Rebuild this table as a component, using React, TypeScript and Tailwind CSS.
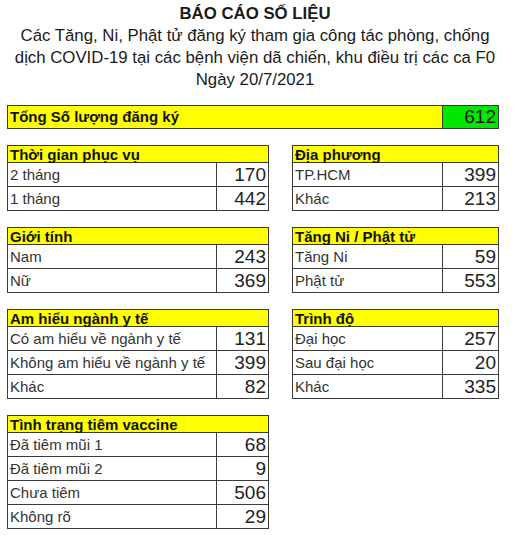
type Row = [string, number]

const Table = ({ title, rows, width, valueWidth }: { title: string; rows: Row[]; width: string; valueWidth: string }) => (
  <div className={`${width} border border-[#3a3a3a]`}>
    <div className="h-[17px] bg-[#ffff00] border-b border-[#3a3a3a] px-[2px] text-[15px] leading-[17px] font-bold text-[#111]">
      {title}
    </div>
    {rows.map(([label, value], i) => (
      <div key={label} className={`flex ${i > 0 ? "h-[24px] border-t border-[#3a3a3a]" : "h-[23px]"}`}>
        <div className="flex-1 px-[2px] text-[15px] leading-[23px] text-[#333] whitespace-nowrap">{label}</div>
        <div className={`${valueWidth} border-l border-[#3a3a3a] pr-[2px] text-right text-[19px] leading-[23px] text-[#222]`}>
          {value}
        </div>
      </div>
    ))}
  </div>
)

export default function App() {
  return (
    <div className="w-[518px] h-[540px] bg-white" style={{ fontFamily: '"Liberation Sans", Arial, sans-serif' }}>
      {/* Heading */}
      <div className="w-[510px] pt-[3px] text-center text-[16.8px] leading-[22px] text-[#1a1a1a]">
        <div className="font-bold">BÁO CÁO SỐ LIỆU</div>
        <div>Các Tăng, Ni, Phật tử đăng ký tham gia công tác phòng, chống</div>
        <div>dịch COVID-19 tại các bệnh viện dã chiến, khu điều trị các ca F0</div>
        <div>Ngày 20/7/2021</div>
      </div>

      {/* Total */}
      <div className="mt-[14px] ml-[7px] w-[492px] h-[24px] flex border border-[#3a3a3a]">
        <div className="flex-1 bg-[#ffff00] px-[2px] text-[15px] leading-[22px] font-bold text-[#111]">Tổng Số lượng đăng ký</div>
        <div className="w-[56px] bg-[#00e600] border-l border-[#3a3a3a] pr-[2px] text-right text-[19px] leading-[22px] text-[#1a1a1a]">
          612
        </div>
      </div>

      <div className="mt-[16px] ml-[7px] flex gap-[23px]">
        <div className="flex flex-col gap-[16px]">
          <Table title="Thời gian phục vụ" width="w-[262px]" valueWidth="w-[52px]" rows={[["2 tháng", 170], ["1 tháng", 442]]} />
          <Table title="Giới tính" width="w-[262px]" valueWidth="w-[52px]" rows={[["Nam", 243], ["Nữ", 369]]} />
          <Table
            title="Am hiểu ngành y tế"
            width="w-[262px]"
            valueWidth="w-[52px]"
            rows={[["Có am hiểu về ngành y tế", 131], ["Không am hiểu về ngành y tế", 399], ["Khác", 82]]}
          />
          <Table
            title="Tình trạng tiêm vaccine"
            width="w-[262px]"
            valueWidth="w-[52px]"
            rows={[["Đã tiêm mũi 1", 68], ["Đã tiêm mũi 2", 9], ["Chưa tiêm", 506], ["Không rõ", 29]]}
          />
        </div>
        <div className="flex flex-col gap-[16px]">
          <Table title="Địa phương" width="w-[207px]" valueWidth="w-[56px]" rows={[["TP.HCM", 399], ["Khác", 213]]} />
          <Table title="Tăng Ni / Phật tử" width="w-[207px]" valueWidth="w-[56px]" rows={[["Tăng Ni", 59], ["Phật tử", 553]]} />
          <Table
            title="Trình độ"
            width="w-[207px]"
            valueWidth="w-[56px]"
            rows={[["Đại học", 257], ["Sau đại học", 20], ["Khác", 335]]}
          />
        </div>
      </div>
    </div>
  )
}
